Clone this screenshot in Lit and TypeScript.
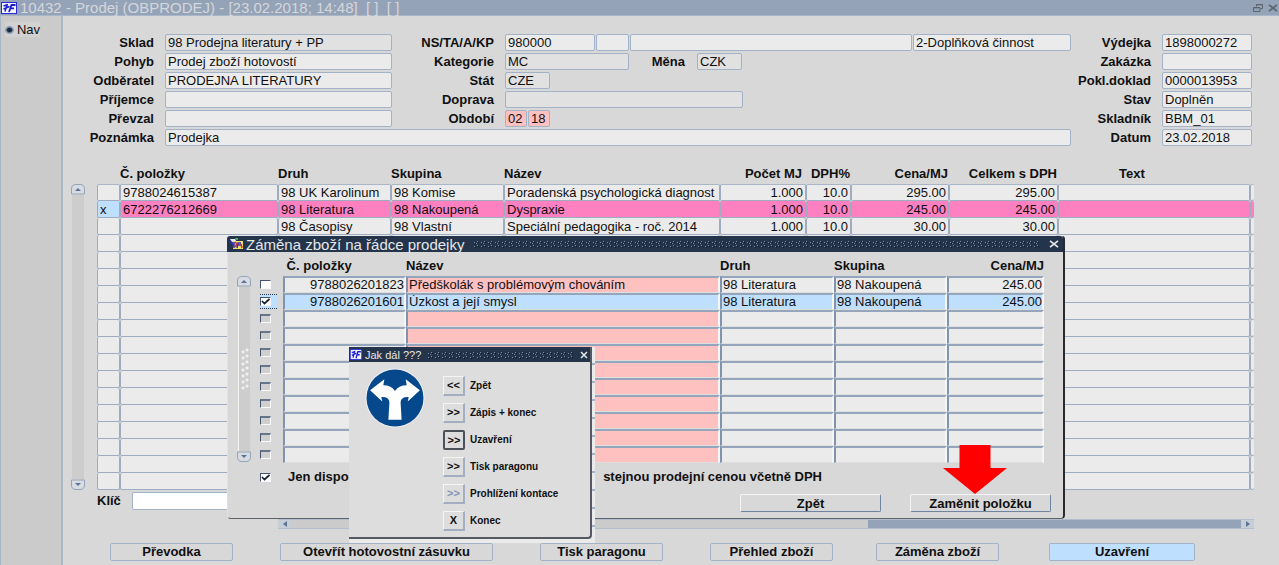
import { LitElement, html, css, svg, nothing } from "lit";
import { customElement, property } from "lit/decorators.js";

interface Item {
  mark?: string;
  code: string;
  kind: string;
  group: string;
  title: string;
  qty: string;
  vat: string;
  price: string;
  total: string;
}

const ITEMS: Item[] = [
  { code: "9788024615387", kind: "98 UK Karolinum", group: "98 Komise", title: "Poradenská psychologická diagnost", qty: "1.000", vat: "10.0", price: "295.00", total: "295.00" },
  { mark: "x", code: "6722276212669", kind: "98 Literatura", group: "98 Nakoupená", title: "Dyspraxie", qty: "1.000", vat: "10.0", price: "245.00", total: "245.00" },
  { code: "", kind: "98 Časopisy", group: "98 Vlastní", title: "Speciální pedagogika - roč. 2014", qty: "1.000", vat: "10.0", price: "30.00", total: "30.00" },
];
const BLANK: Item = { code: "", kind: "", group: "", title: "", qty: "", vat: "", price: "", total: "" };
const ITEM_ROWS = 18;

const SWAPS = [
  { code: "9788026201823", title: "Předškolák s problémovým chováním", kind: "98 Literatura", group: "98 Nakoupená", price: "245.00", on: false },
  { code: "9788026201601", title: "Úzkost a její smysl", kind: "98 Literatura", group: "98 Nakoupená", price: "245.00", on: true },
];
const SWAP_ROWS = 11;

const CHOICES = [
  { key: "<<", text: "Zpět" },
  { key: ">>", text: "Zápis + konec" },
  { key: ">>", text: "Uzavření", focus: true },
  { key: ">>", text: "Tisk paragonu" },
  { key: ">>", text: "Prohlížení kontace", off: true },
  { key: "X", text: "Konec" },
];

const logo = html`<svg class="logo" viewBox="0 0 16 12" preserveAspectRatio="none" aria-hidden="true">
  <rect width="16" height="12" fill="#2a2ad8" />
  <rect x="1" y="1" width="14" height="10" fill="#f4f4ff" />
  <path d="M2.500 4L7 2.500M6 3L4 9.500M2.500 7L8.500 4.500" stroke="#1c1cd0" stroke-width="1.500" fill="none" />
  <path d="M8 10L10.500 3H14.500M9.500 6.300H13" stroke="#1c1cd0" stroke-width="1.800" fill="none" />
</svg>`;

const close = html`<svg viewBox="0 0 10 8" width="10" height="8" aria-hidden="true">
  <path d="M1 .8L9 7.200M9 .8L1 7.200" stroke="currentColor" stroke-width="1.700" fill="none" />
</svg>`;

@customElement("rail-bar")
export class RailBar extends LitElement {
  @property({ type: Boolean }) grip = false;

  static styles = css`
    :host { display: flex; flex-direction: column; align-items: center; width: 14px; }
    svg { display: block; flex: none; }
    .track { flex: 1; width: 12px; background: #cdcdcd; display: flex; align-items: center; justify-content: center; }
    .track.framed { border-left: 1px solid #f4f4f4; width: 11px; }
    .grip {
      width: 8px; height: 42px;
      background-image: radial-gradient(circle at 2px 4px, #f0f0f0 1px, transparent 2px),
        radial-gradient(circle at 6px 2px, #f0f0f0 1px, transparent 2px);
      background-size: 8px 6px;
    }
  `;

  render() {
    return html`
      <svg width="14" height="11" viewBox="0 0 14 11" aria-hidden="true">
        <path d="M.5 10V5Q.5 .5 5 .5h4Q13.500 .5 13.500 5v5z" fill="#d8dce2" stroke="#94a4ba" />
        <path d="M4 7L7 4l3 3z" fill="#5b7394" />
      </svg>
      <div class="track ${this.grip ? "framed" : ""}">${this.grip ? html`<div class="grip"></div>` : nothing}</div>
      <svg width="14" height="11" viewBox="0 0 14 11" aria-hidden="true">
        <path d="M.5 1v5Q.5 10.500 5 10.500h4Q13.500 10.500 13.500 6V1z" fill="#d8dce2" stroke="#94a4ba" />
        <path d="M4 4l3 3 3-3z" fill="#5b7394" />
      </svg>`;
  }
}

@customElement("app-root")
export class AppRoot extends LitElement {
  static styles = css`
    :host {
      display: flex; flex-direction: column; position: relative; min-height: 100vh;
      overflow: hidden; background: #d8d8d8; color: #101010;
      font: 13px/16px "Liberation Sans", Arial, sans-serif;
    }
    * { box-sizing: border-box; }
    input, button { font: inherit; color: inherit; margin: 0; border-radius: 0; }
    button { padding: 0; cursor: pointer; }
    svg { display: block; }

    .titlebar {
      display: flex; align-items: center; height: 16px; padding: 0 1px; gap: 3px;
      background: #95a3b8; border-bottom: 1px solid #a9b6c8; color: #d4d7db;
    }
    .titlebar h1 { flex: 1; margin: 0; font-size: 15px; font-weight: 400; line-height: 15px; white-space: pre; }
    .logo { width: 16px; height: 12px; flex: none; }
    .plain { border: 0; background: none; color: #5c646e; display: flex; }
    .tools { display: flex; gap: 5px; align-items: center; }

    .body { flex: 1; display: flex; }
    .side { width: 63px; flex: none; padding: 6px 4px; background: #cbcbcb; border: 1px solid #a9b6c6; border-width: 0 2px 0 1px; }
    .side label { display: flex; align-items: center; gap: 3px; width: 35px; height: 15px; background: #d2d2d2; }
    .side input {
      appearance: none; width: 9px; height: 8px; border-radius: 50%; border: 1px solid #8fa0b6;
      background: radial-gradient(#1d2b42 40%, #a9b6c8 80%);
    }
    main { flex: 1; min-width: 0; padding: 18px 25px 4px 2px; display: flex; flex-direction: column; }

    .form {
      display: grid; grid-template-columns: 100px 227px 113px minmax(0, 1fr) 91px 90px;
      row-gap: 2px; padding-right: 2px;
    }
    .form > label, .inner label { font-weight: 700; text-align: right; padding-right: 11px; line-height: 17px; white-space: nowrap; }
    .box { width: 100%; height: 17px; padding: 0 2px; border: 1px solid #a3b2c6; border-radius: 2px; background: #ebebeb; outline: 0; min-width: 0; }
    .dim { background: #e1e1e1; }
    .rose { background: #ffc0c0; }
    .inner { display: flex; gap: 1px; }
    .inner .w22 { width: 22px; }
    .inner .w33 { width: 33px; }
    .inner .w45 { width: 45px; }
    .inner .w90 { width: 90px; }
    .inner .w124 { width: 124px; }
    .inner .w158 { width: 158px; }
    .inner .w238 { width: 238px; }
    .inner .grow { flex: 1; }
    .inner label { width: 66px; }
    .note { grid-column: 2 / 5; }

    .list { display: flex; gap: 12px; padding-left: 6px; margin-top: 18px; }
    .list rail-bar { margin-top: 20px; }
    table { border-collapse: separate; border-spacing: 0; table-layout: fixed; }
    .items { flex: 1; min-width: 0; width: 100%; }
    th { padding: 0; text-align: left; font-weight: 700; line-height: 20px; white-space: nowrap; }
    td { overflow: hidden; white-space: nowrap; line-height: 15px; }
    .items td {
      height: 17px; padding: 0 2px; background: #ebebeb; border: 1px solid #9dacc1; border-top: 0; border-radius: 2px;
    }
    .items tbody tr:first-child td { border-top: 1px solid #a9b6c8; line-height: 14px; }
    .items tr.hit td { background: #ff80c0; }
    .items tr.hit td:first-child { background: #bfdfff; }
    .num { text-align: right; }
    .items th.num { padding-right: 4px; }
    .items th.tight { padding-right: 1px; }
    .items th.text { text-align: center; padding-right: 44px; }
    .c-mark { width: 23px; } .c-code { width: 158px; } .c-kind, .c-group { width: 113px; }
    .c-title { width: 216px; } .c-qty { width: 86px; } .c-vat { width: 45px; }
    .c-price { width: 98px; } .c-total { width: 109px; } .c-end { width: 4px; }
    .items td:last-child { padding: 0; border-right: 0; }

    .key { display: flex; align-items: center; gap: 11px; margin: 2px 0 0 32px; font-weight: 700; }
    .key label { white-space: nowrap; }
    .key .box { width: 180px; height: 18px; background: #fff; }
    .hbar { display: flex; height: 10px; margin: 9px 0 0 213px; background: #cbcbcb; border: 1px solid #b3bfce; border-width: 1px 0; }
    .hbar button { width: 13px; border: 0; background: #c6ced8; display: flex; align-items: center; justify-content: center; }
    .hbar .rest { flex: 577; }
    .hbar .thumb { flex: 373; background: #95a3b8; }

    .actions {
      display: grid; grid-template-columns: 170fr 260fr 170fr 166fr 173fr 146fr;
      margin: 14px 59px 0 45px;
    }
    .actions button {
      width: 123px; height: 18px; border: 1px solid #a3b2c6; border-radius: 2px; background: #d8d8d8;
      font-weight: 700; line-height: 16px; white-space: nowrap;
    }
    .actions .wide { width: 213px; }
    .actions .primary { width: 146px; background: #bfdfff; }

    .window { position: absolute; background: #d8d8d8; }
    .bar { display: flex; align-items: center; background: #24344b; color: #e6e8ea; height: 16px; }
    .bar h2 { margin: 0; font-weight: 400; white-space: nowrap; }
    .bar .plain { color: #e6e8ea; }
    .weave {
      flex: 1; height: 8px;
      background: url("data:image/svg+xml,%3Csvg xmlns='http://www.w3.org/2000/svg' width='7' height='8'%3E%3Cpath d='M1 2h1v1H1zM1 6h1v1H1zM4 1h1v1H4zM4 5h1v1H4zM3 3h1v1H3z' fill='%237d8ea4'/%3E%3Cpath d='M2 3h1v1H2zM2 7h1v1H2zM5 2h1v1H5zM5 6h1v1H5z' fill='%230e1828'/%3E%3C/svg%3E");
    }
    .swap {
      left: 227px; top: 236px; width: 838px; border-radius: 3px 3px 4px 4px;
      border: 1px solid #e2e2e2; border-width: 0 2px 1px 1px; border-right-color: #2a2a2a; border-bottom-color: #5c6268;
    }
    .swap .bar { padding: 0 4px 0 2px; margin-left: -1px; border-radius: 3px 3px 0 0; }
    .swap h2 { font-size: 15px; line-height: 15px; margin: 0 9px 0 3px; }
    .swap .weave { margin-right: 9px; }
    .swap .content { display: flex; gap: 9px; padding: 4px 19px 0 9px; }
    .swap rail-bar { margin: 20px 0 1px; }
    .swap table { flex: 1; width: 100%; }
    .swap td {
      height: 17px; padding: 0 1px; line-height: 14px; background: #ebebeb;
      border: 1px solid #f6f6f6; border-top: 2px solid #95a5bb; border-left: 2px solid #8094ae; border-right-width: 2px;
      border-bottom: 1px solid #dedede;
    }
    .swap td.num { padding: 0; }
    .swap td.rose { background: #ffc0c0; }
    .swap tr.pick td { background: #bfdfff; }
    .swap td.tick, .swap tr.pick td.tick { border: 0; padding: 0; background: none; }
    .cell { display: flex; align-items: center; width: 17px; height: 15px; }
    .pick .cell { background: #bfdfff; border: 1px dotted #26384f; border-width: 1px 0; }
    .check {
      appearance: none; flex: none; width: 11px; height: 9px; background: #fff;
      border: 1px solid #fafafa; border-top-color: #44546c; border-left-color: #44546c;
    }
    .check:disabled { background: #cfcfcf; border-top-width: 2px; border-top-color: #67758a; }
    .check:checked {
      background: #fff url("data:image/svg+xml,%3Csvg xmlns='http://www.w3.org/2000/svg' viewBox='0 0 9 7'%3E%3Cpath d='M1 3l2.500 2.500L8.500 1' fill='none' stroke='%23142035' stroke-width='1.700'/%3E%3C/svg%3E") center / 9px 7px no-repeat;
    }
    .s-tick { width: 23px; } .s-code { width: 123px; } .s-kind { width: 114px; } .s-group { width: 113px; } .s-price { width: 97px; }
    .only { display: flex; align-items: center; gap: 17px; margin: 6px 0 0 32px; }
    .only label { display: flex; justify-content: space-between; width: 534px; font-weight: 700; }
    .foot { display: flex; justify-content: flex-end; gap: 29px; padding: 9px 12px 6px 0; }
    .foot button {
      width: 141px; height: 18px; font-weight: 700; line-height: 15px; background: #d8d8d8;
      border: 1px solid #f4f4f4; border-right-color: #6f84a2; border-bottom-color: #6f84a2; border-radius: 2px;
    }
    .arrow { position: absolute; left: 715px; top: 209px; pointer-events: none; }

    .next {
      left: 349px; top: 347px; width: 246px; padding: 0 3px 4px 0;
      background: repeating-linear-gradient(#ebebeb 0 16px, #a3b2c6 16px 18px);
    }
    .next::after { content: ""; position: absolute; left: 0; right: 0; bottom: 0; height: 4px; background: #ebebeb; }
    .frame { position: relative; background: #dddddd; border: 1px solid #565a60; border-width: 0 2px 2px 0; border-radius: 0 0 4px 0; }
    .next .bar { height: 15px; padding: 0 2px 0 1px; }
    .next .logo { width: 12px; height: 11px; }
    .next h2 { font-size: 11px; line-height: 14px; margin: 0 6px 0 3px; }
    .next .weave { margin-right: 5px; }
    .next .content { display: flex; gap: 18px; padding: 6px 0 3px 16px; }
    .choices { display: grid; grid-template-columns: 22px auto; column-gap: 5px; grid-auto-rows: 27px; align-items: center; padding-top: 4px; }
    .choices label { font-size: 10px; font-weight: 700; line-height: 14px; white-space: nowrap; }
    .choices button {
      width: 22px; height: 20px; font-size: 11px; font-weight: 700; line-height: 16px; background: #dddddd;
      border: 1px solid #f4f4f4; border-right: 2px solid #a3afc0; border-bottom: 2px solid #a3afc0;
    }
    .choices button:disabled { color: #8296b2; }
    .choices .focus { border: 2px solid #4c5058; border-radius: 2px; }
  `;

  private titleBar() {
    return html`<header class="titlebar">
      ${logo}
      <h1>10432 - Prodej (OBPRODEJ) - [23.02.2018; 14:48]  [ ]  [ ]</h1>
      <div class="tools">
        <button class="plain" aria-label="Obnovit">
          <svg width="10" height="8" viewBox="0 0 10 8" aria-hidden="true">
            <path d="M3.500 2.500v-2h6v4h-2M3 .8h6.500M.5 3.500h6.500v4H.5zM.5 3.800h6.500" stroke="currentColor" fill="none" />
          </svg>
        </button>
        <button class="plain" aria-label="Zavřít">${close}</button>
      </div>
    </header>`;
  }

  private form() {
    return html`<div class="form">
      <label for="sklad">Sklad</label><input id="sklad" class="box dim" .value=${"98 Prodejna literatury + PP"} />
      <label for="ns">NS/TA/A/KP</label>
      <div class="inner">
        <input id="ns" class="box w90" .value=${"980000"} />
        <input class="box w33" aria-label="TA" />
        <input class="box grow" aria-label="A" />
        <input class="box w158" aria-label="KP" .value=${"2-Doplňková činnost"} />
      </div>
      <label for="vydejka">Výdejka</label><input id="vydejka" class="box" .value=${"1898000272"} />

      <label for="pohyb">Pohyb</label><input id="pohyb" class="box" .value=${"Prodej zboží hotovostí"} />
      <label for="kat">Kategorie</label>
      <div class="inner">
        <input id="kat" class="box dim w124" .value=${"MC"} />
        <label for="mena">Měna</label><input id="mena" class="box dim w45" .value=${"CZK"} />
      </div>
      <label for="zakazka">Zakázka</label><input id="zakazka" class="box" />

      <label for="odb">Odběratel</label><input id="odb" class="box" .value=${"PRODEJNA LITERATURY"} />
      <label for="stat">Stát</label>
      <div class="inner"><input id="stat" class="box dim w45" .value=${"CZE"} /></div>
      <label for="pokl">Pokl.doklad</label><input id="pokl" class="box" .value=${"0000013953"} />

      <label for="prij">Příjemce</label><input id="prij" class="box" />
      <label for="dopr">Doprava</label>
      <div class="inner"><input id="dopr" class="box dim w238" /></div>
      <label for="stav">Stav</label><input id="stav" class="box" .value=${"Doplněn"} />

      <label for="prev">Převzal</label><input id="prev" class="box" />
      <label for="obd">Období</label>
      <div class="inner">
        <input id="obd" class="box rose w22" .value=${"02"} />
        <input class="box rose w22" aria-label="Rok" .value=${"18"} />
      </div>
      <label for="skladnik">Skladník</label><input id="skladnik" class="box" .value=${"BBM_01"} />

      <label for="pozn">Poznámka</label><input id="pozn" class="box note" .value=${"Prodejka"} />
      <label for="datum">Datum</label><input id="datum" class="box" .value=${"23.02.2018"} />
    </div>`;
  }

  private items() {
    const rows = Array.from({ length: ITEM_ROWS }, (_, i) => ITEMS[i] ?? BLANK);
    return html`<div class="list">
      <rail-bar></rail-bar>
      <table class="items">
        <colgroup>
          <col class="c-mark" /><col class="c-code" /><col class="c-kind" /><col class="c-group" /><col class="c-title" />
          <col class="c-qty" /><col class="c-vat" /><col class="c-price" /><col class="c-total" /><col /><col class="c-end" />
        </colgroup>
        <thead>
          <tr>
            <th></th><th>Č. položky</th><th>Druh</th><th>Skupina</th><th>Název</th>
            <th class="num">Počet MJ</th><th class="num tight">DPH%</th><th class="num tight">Cena/MJ</th>
            <th class="num tight">Celkem s DPH</th><th class="text">Text</th><th></th>
          </tr>
        </thead>
        <tbody>
          ${rows.map((r) => html`<tr class=${r.mark ? "hit" : ""}>
            <td>${r.mark}</td><td>${r.code}</td><td>${r.kind}</td><td>${r.group}</td><td>${r.title}</td>
            <td class="num">${r.qty}</td><td class="num">${r.vat}</td><td class="num">${r.price}</td>
            <td class="num">${r.total}</td><td></td><td></td>
          </tr>`)}
        </tbody>
      </table>
    </div>`;
  }

  private swapWindow() {
    const rows = Array.from({ length: SWAP_ROWS }, (_, i) => SWAPS[i]);
    return html`<section class="window swap" role="dialog" aria-labelledby="swap-title">
      <div class="bar">
        <svg width="14" height="12" viewBox="0 0 14 12" aria-hidden="true">
          <path d="M1 1h5l2 3H3z" fill="#e8e8f4" />
          <rect x="6" y="0" width="3" height="2" fill="#30b050" />
          <rect x="4" y="3" width="10" height="8" fill="#f2e26a" />
          <path d="M1 3l4 5M5 4v6M8 10l1-5h3M8 7h4" stroke="#3030c8" stroke-width="1.500" fill="none" />
          <path d="M6 4l2 2-2 3M12 6l1 4" stroke="#d02c2c" stroke-width="1.500" fill="none" />
        </svg>
        <h2 id="swap-title">Záměna zboží na řádce prodejky</h2>
        <div class="weave"></div>
        <button class="plain" aria-label="Zavřít">${close}</button>
      </div>
      <div class="content">
        <rail-bar grip></rail-bar>
        <table>
          <colgroup>
            <col class="s-tick" /><col class="s-code" /><col /><col class="s-kind" /><col class="s-group" /><col class="s-price" />
          </colgroup>
          <thead>
            <tr><th></th><th>&nbsp;Č. položky</th><th>Název</th><th>Druh</th><th>Skupina</th><th class="num">Cena/MJ</th></tr>
          </thead>
          <tbody>
            ${rows.map((r, i) => html`<tr class=${r?.on ? "pick" : ""}>
              <td class="tick"><div class="cell">
                <input type="checkbox" class="check" aria-label="Řádek ${i + 1}" .checked=${!!r?.on} ?disabled=${!r} />
              </div></td>
              <td class="num">${r?.code}</td><td class="rose">${r?.title}</td><td>${r?.kind}</td><td>${r?.group}</td>
              <td class="num">${r?.price}</td>
            </tr>`)}
          </tbody>
        </table>
      </div>
      <div class="only">
        <input id="only" type="checkbox" class="check" checked />
        <label for="only"><span>Jen dispo</span><span>stejnou prodejní cenou včetně DPH</span></label>
      </div>
      <div class="foot"><button>Zpět</button><button>Zaměnit položku</button></div>
      <svg class="arrow" width="64" height="49" viewBox="0 0 64 49" aria-hidden="true">
        <path d="M16.500 0h31v23H64L32 49 0 23h16.500z" fill="#fe0000" />
      </svg>
    </section>`;
  }

  private nextWindow() {
    const arms = svg`<path d="M23 51L24 34Q24 28 16 28.500L17 33L5 22L19 11L18 17Q26 17 29.500 22.500Q33 17 41 17L40 11L54 22L42 33L43 28.500Q35 28 35 34L36 51z" fill="#fff" />`;
    return html`<section class="window next" role="dialog" aria-labelledby="next-title">
      <div class="frame">
        <div class="bar">
          ${logo}
          <h2 id="next-title">Jak dál ???</h2>
          <div class="weave"></div>
          <button class="plain" aria-label="Zavřít">
            <svg width="8" height="8" viewBox="0 0 8 8" aria-hidden="true"><path d="M1 1l6 6M7 1L1 7" stroke="currentColor" stroke-width="1.500" /></svg>
          </button>
        </div>
        <div class="content">
          <svg width="60" height="60" viewBox="0 0 59 59" aria-hidden="true">
            <circle cx="29.500" cy="29.500" r="29" fill="#f2f2f2" />
            <circle cx="29.500" cy="29.500" r="28" fill="#05488c" />
            ${arms}
          </svg>
          <div class="choices">
            ${CHOICES.map((c, i) => html`
              <button id="choice-${i}" class=${c.focus ? "focus" : ""} ?disabled=${c.off}>${c.key}</button>
              <label for="choice-${i}">${c.text}</label>`)}
          </div>
        </div>
      </div>
    </section>`;
  }

  render() {
    return html`
      ${this.titleBar()}
      <div class="body">
        <nav class="side"><label><input type="radio" name="nav" checked />Nav</label></nav>
        <main>
          ${this.form()}
          ${this.items()}
          <div class="key"><label for="klic">Klíč</label><input id="klic" class="box" /></div>
          <div class="hbar">
            <button aria-label="Doleva"><svg width="4" height="6" viewBox="0 0 4 6" aria-hidden="true"><path d="M4 0v6L0 3z" fill="#5b7394" /></svg></button>
            <div class="rest"></div><div class="thumb"></div>
            <button aria-label="Doprava"><svg width="4" height="6" viewBox="0 0 4 6" aria-hidden="true"><path d="M0 0v6l4-3z" fill="#5b7394" /></svg></button>
          </div>
          <div class="actions">
            <button>Převodka</button>
            <button class="wide">Otevřít hotovostní zásuvku</button>
            <button>Tisk paragonu</button>
            <button>Přehled zboží</button>
            <button>Záměna zboží</button>
            <button class="primary">Uzavření</button>
          </div>
        </main>
      </div>
      ${this.swapWindow()}
      ${this.nextWindow()}
    `;
  }
}
